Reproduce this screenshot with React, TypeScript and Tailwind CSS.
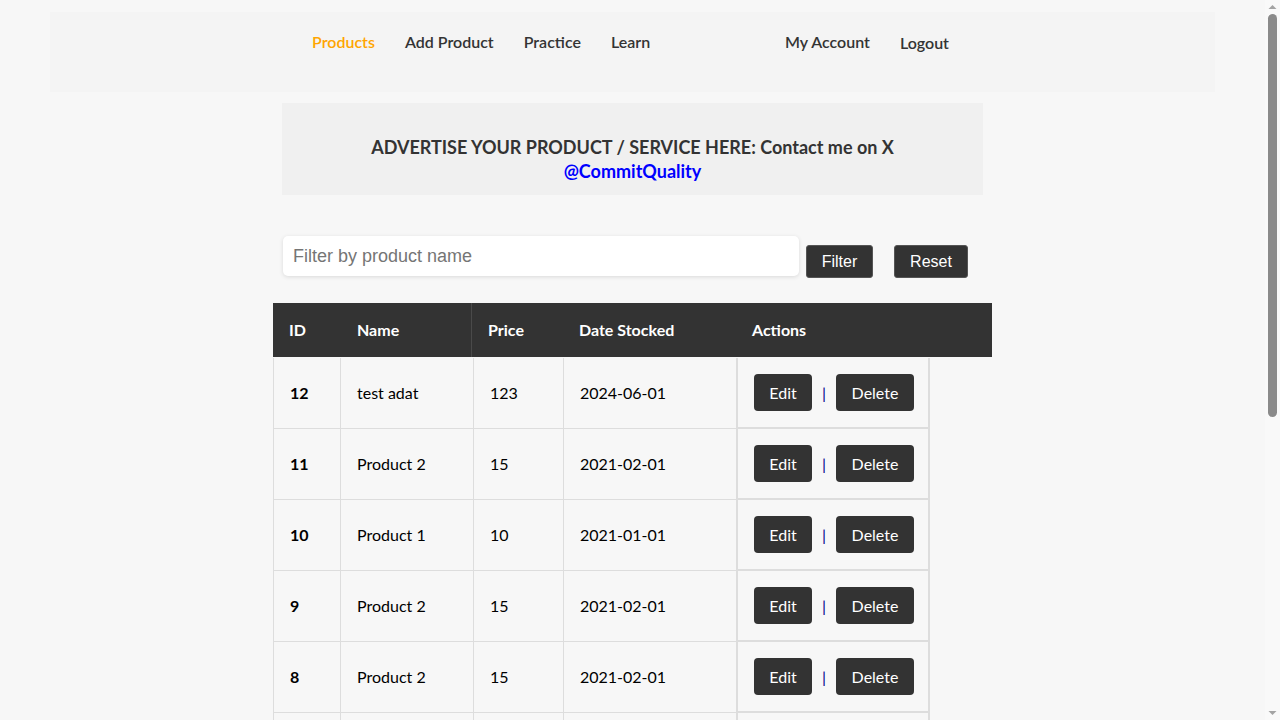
import React from "react";

const rows = [
  { id: "12", name: "test adat", price: "123", date: "2024-06-01" },
  { id: "11", name: "Product 2", price: "15", date: "2021-02-01" },
  { id: "10", name: "Product 1", price: "10", date: "2021-01-01" },
  { id: "9", name: "Product 2", price: "15", date: "2021-02-01" },
  { id: "8", name: "Product 2", price: "15", date: "2021-02-01" },
  { id: "7", name: "Product 2", price: "15", date: "2021-02-01" },
];

const font = { fontFamily: "Lato, 'Noto Sans', sans-serif" };

function Scrollbar() {
  return (
    <div className="w-[15px] h-full bg-[#f9f9f9] flex flex-col items-center shrink-0">
      <svg width="15" height="14" viewBox="0 0 15 14" className="shrink-0">
        <polygon points="3.5,9 7.5,5 11.5,9" fill="#a3a3a3" />
      </svg>
      <div className="w-[9px] h-[403px] rounded-full bg-[#8a8a8a]" />
      <div className="flex-1" />
      <svg width="15" height="14" viewBox="0 0 15 14" className="shrink-0">
        <polygon points="3.5,5 11.5,5 7.5,9" fill="#a3a3a3" />
      </svg>
    </div>
  );
}

export default function App() {
  return (
    <div className="h-[720px] overflow-hidden flex bg-[#f7f7f7]">
      <div className="flex-1 min-w-0 pt-[12px] text-[#333]" style={font}>
        <nav className="mx-[50px] h-[80px] bg-[#f4f4f4] flex items-start pt-[18px] text-[16px] font-semibold">
          <div className="ml-[262px] w-[473px] flex gap-[30px]">
            <span className="text-[#ffa500]">Products</span>
            <span>Add Product</span>
            <span>Practice</span>
            <span>Learn</span>
          </div>
          <div className="flex gap-[30px]">
            <span>My Account</span>
            <span className="mt-[1px]">Logout</span>
          </div>
        </nav>

        <div className="mx-auto mt-[11px] w-[701px] h-[92px] bg-[#f0f0f0] flex flex-col items-center pt-[32px] text-[18px] font-bold leading-[24px]">
          <div>ADVERTISE YOUR PRODUCT / SERVICE HERE: Contact me on X</div>
          <div className="text-[#0000ff]">@CommitQuality</div>
        </div>

        <div className="mx-auto mt-[41px] w-[701px] flex items-start" style={{ fontFamily: "'Liberation Sans', Arial, sans-serif" }}>
          <input
            className="ml-[1px] w-[516px] h-[40px] bg-white rounded-[5px] px-[10px] text-[18px] text-[#333] placeholder:text-[#757575] shadow-[0_1px_4px_rgba(0,0,0,0.12)] outline-none"
            placeholder="Filter by product name"
          />
          <button className="ml-[7px] mt-[9px] w-[67px] h-[33px] bg-[#333] text-white text-[16px] rounded-[3px] border border-[#555]">
            Filter
          </button>
          <button className="ml-[21px] mt-[9px] w-[74px] h-[33px] bg-[#333] text-white text-[16px] rounded-[3px] border border-[#555]">
            Reset
          </button>
        </div>

        <div className="mx-auto mt-[25px] w-[719px] text-[16px]">
          <div className="h-[54px] bg-[#333] text-white font-bold flex items-center">
            <div className="w-[67px] pl-[16px]">ID</div>
            <div className="w-[132px] pl-[17px] self-stretch flex items-center border-r border-[#4a4a4a]">Name</div>
            <div className="w-[91px] pl-[16px]">Price</div>
            <div className="w-[173px] pl-[16px]">Date Stocked</div>
            <div className="pl-[16px]">Actions</div>
          </div>
          {rows.map((r, i) => (
            <div key={r.id} className={`flex text-black ${i === 0 ? "h-[72px] pt-[1px]" : "h-[71px]"}`}>
              <div className="w-[67px] pl-[16px] flex items-center font-bold border-l border-b border-[#ddd]">{r.id}</div>
              <div className="w-[133px] pl-[16px] flex items-center border-l border-b border-[#ddd]">{r.name}</div>
              <div className="w-[90px] pl-[16px] flex items-center border-l border-b border-[#ddd]">{r.price}</div>
              <div className="w-[173px] pl-[16px] flex items-center border-l border-b border-[#ddd]">{r.date}</div>
              <div className="w-[194px] pl-[16px] flex items-center border-l-2 border-r-2 border-b-2 border-[#ddd] text-white">
                <button className="w-[58px] h-[37px] bg-[#333] rounded-[4px]">Edit</button>
                <span className="mx-[10px] text-[#00008b]">|</span>
                <button className="w-[78px] h-[37px] bg-[#333] rounded-[4px]">Delete</button>
              </div>
            </div>
          ))}
        </div>
      </div>
      <Scrollbar />
    </div>
  );
}
